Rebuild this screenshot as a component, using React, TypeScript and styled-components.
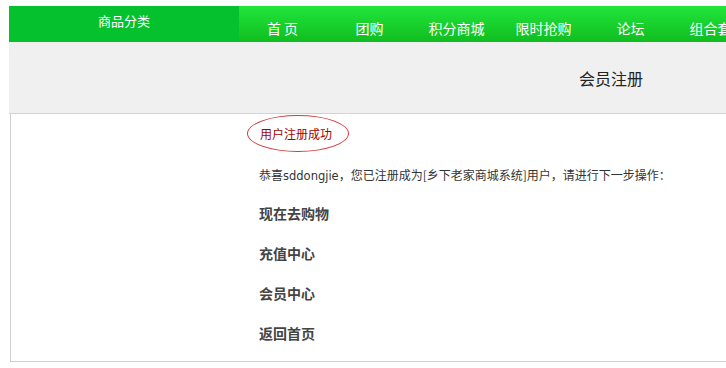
import React from "react";
import styled, { createGlobalStyle } from "styled-components";

const GlobalStyle = createGlobalStyle`
  html, body {
    margin: 0;
    padding: 0;
    background: #fff;
    overflow: hidden;
  }
  body {
    font-family: "Noto Sans CJK SC", "DejaVu Sans", sans-serif;
    font-size: 12px;
    color: #333;
  }
`;

const navItems = ["首 页", "团购", "积分商城", "限时抢购", "论坛", "组合套餐"];

const links = ["现在去购物", "充值中心", "会员中心", "返回首页"];

/* ------------ styled parts ------------ */

const Page = styled.div`
  width: 1204px;
  margin: 6px 0 0 9px;
`;

const NavBar = styled.nav`
  display: flex;
  height: 36px;
  background: linear-gradient(#22e53b, #10bd20);
`;

const CategoryTab = styled.div`
  flex: 0 0 230px;
  background: #05c12e;
  color: #fff;
  font-size: 13px;
  line-height: 30px;
  text-align: center;
`;

const NavItem = styled.a`
  flex: 0 0 87px;
  color: #fff;
  font-size: 14px;
  line-height: 28px;
  padding-top: 8px;
  text-align: center;
  text-decoration: none;
  white-space: pre;
`;

const TitlePanel = styled.div`
  height: 71px;
  background: #f0f0f0;
  border-bottom: 1px solid #d2d2d2;
  display: flex;
  align-items: center;
  justify-content: center;
  font-size: 16px;
  color: #222;
`;

const ContentBox = styled.div`
  margin-left: 1px;
  border-left: 1px solid #cfcfcf;
  border-bottom: 1px solid #cfcfcf;
  padding: 1px 0 8px 248px;
`;

const SuccessTag = styled.div`
  display: inline-flex;
  align-items: center;
  box-sizing: border-box;
  width: 102px;
  height: 37px;
  margin-left: -12px;
  padding-left: 12px;
  border: 1px solid #d43a3a;
  border-radius: 50%;
  color: #a30000;
  font-size: 12px;
`;

const Greeting = styled.p`
  margin: 11px 0 0;
  line-height: 24px;
  font-size: 12px;
  color: #333;
`;

const Username = styled.span`
  font-family: "DejaVu Sans", sans-serif;
  font-size: 11.5px;
`;

const LinkList = styled.div`
  margin-top: 5px;
  display: flex;
  flex-direction: column;
`;

const ActionLink = styled.a`
  display: block;
  height: 40px;
  line-height: 40px;
  font-size: 14px;
  font-weight: bold;
  color: #444;
  text-decoration: none;
`;

export default function App() {
  return (
    <>
      <GlobalStyle />
      <Page>
        <NavBar>
          <CategoryTab>商品分类</CategoryTab>
          {navItems.map((item) => (
            <NavItem key={item} href="#">
              {item}
            </NavItem>
          ))}
        </NavBar>
        <TitlePanel>会员注册</TitlePanel>
        <ContentBox>
          <SuccessTag>用户注册成功</SuccessTag>
          <Greeting>
            恭喜<Username>sddongjie</Username>，您已注册成为[乡下老家商城系统]用户，请进行下一步操作：
          </Greeting>
          <LinkList>
            {links.map((l) => (
              <ActionLink key={l} href="#">
                {l}
              </ActionLink>
            ))}
          </LinkList>
        </ContentBox>
      </Page>
    </>
  );
}
